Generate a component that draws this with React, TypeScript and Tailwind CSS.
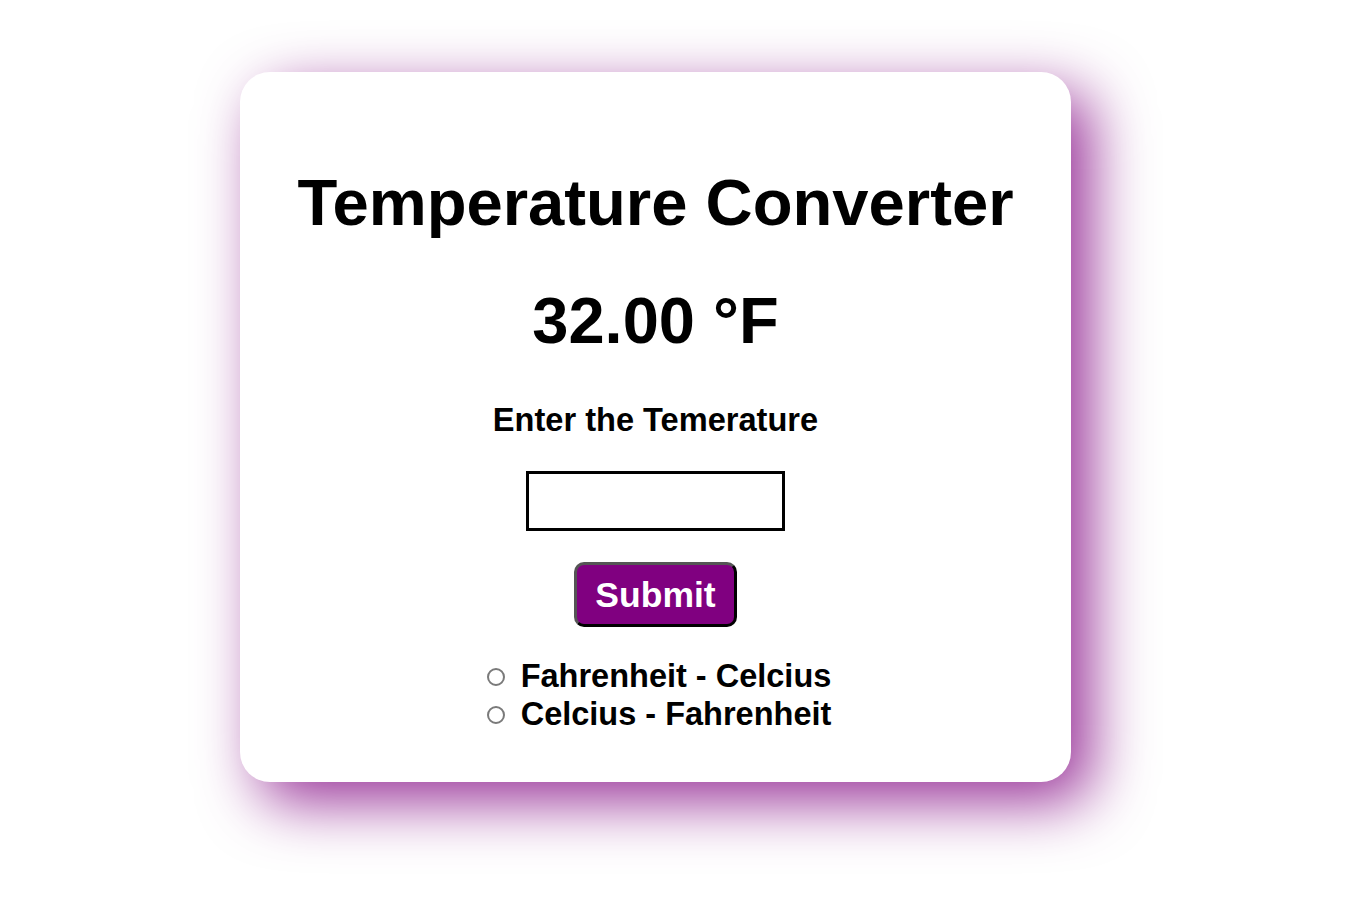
import React from "react";

export default function App() {
  return (
    <div
      className="min-h-[917px] w-full bg-white pt-[72px] pb-[135px]"
      style={{ fontFamily: '"Liberation Sans", Arial, sans-serif' }}
    >
      <div className="ml-[240px] w-[831px] h-[710px] rounded-[30px] bg-white shadow-[20px_20px_60px_rgba(128,0,128,0.8)] pt-[93px] flex flex-col items-center font-bold text-black">
        <h1 className="text-[65.2px] leading-[75px] font-bold">Temperature Converter</h1>
        <h2 className="mt-[43px] text-[65px] leading-[75px] font-bold">32.00 °F</h2>
        <p className="mt-[43px] text-[32.6px] leading-[37px] font-bold">Enter the Temerature</p>
        <input
          type="text"
          className="mt-[33px] w-[259px] h-[60px] border-[3px] border-black bg-white outline-none"
        />
        <button
          type="button"
          className="mt-[31px] w-[163px] h-[65px] rounded-[10px] border-[3px] border-t-[#555555] border-l-[#555555] border-r-black border-b-black bg-[#800080] text-white text-[35.5px] leading-[40px] font-bold"
        >
          Submit
        </button>
        <div className="mt-[30px] pl-[7px] flex flex-col items-start text-[32.5px] leading-[38px] font-bold">
          <label className="flex items-center">
            <input
              type="radio"
              name="conv"
              className="appearance-none w-[18px] h-[18px] rounded-full border-2 border-[#7a7a7a] bg-white mr-[16px] mt-[2px]"
            />
            <span>Fahrenheit - Celcius</span>
          </label>
          <label className="flex items-center">
            <input
              type="radio"
              name="conv"
              className="appearance-none w-[18px] h-[18px] rounded-full border-2 border-[#7a7a7a] bg-white mr-[16px] mt-[2px]"
            />
            <span>Celcius - Fahrenheit</span>
          </label>
        </div>
      </div>
    </div>
  );
}
